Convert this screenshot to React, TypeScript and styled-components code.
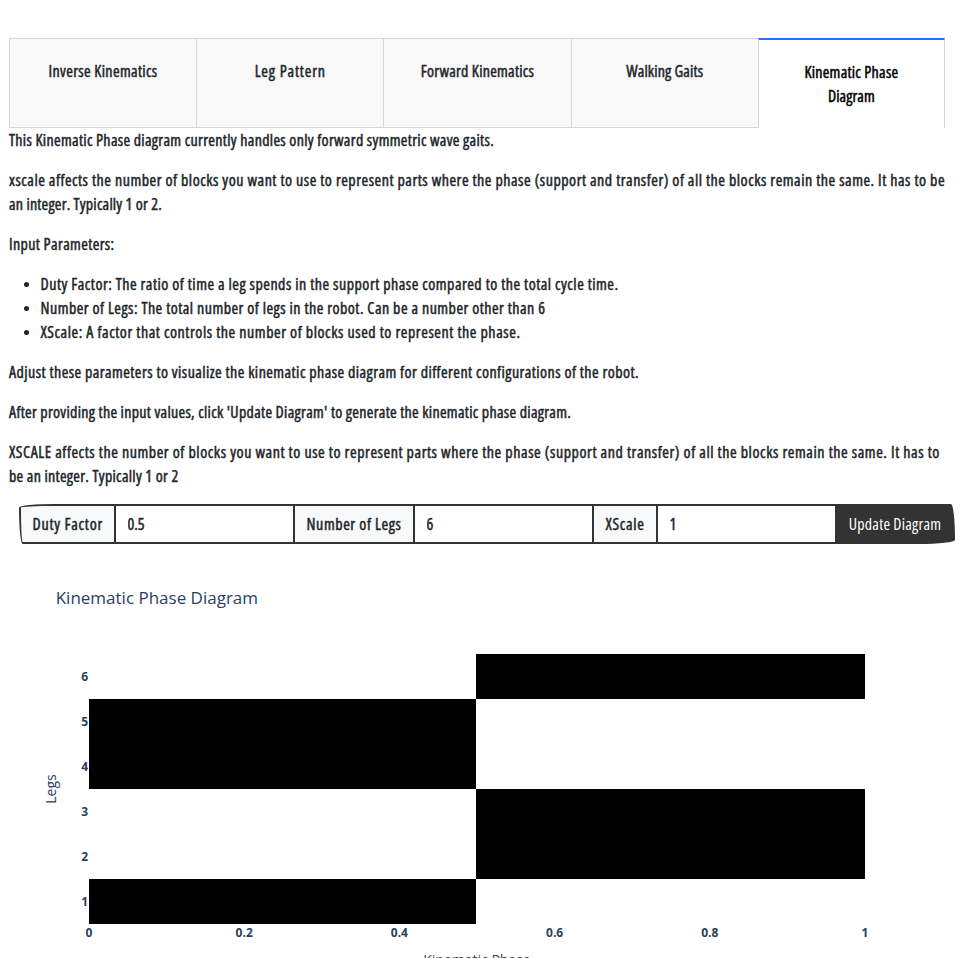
import React from "react";
import styled, { createGlobalStyle, css } from "styled-components";

const GlobalStyle = createGlobalStyle`
  *, *::before, *::after { box-sizing: border-box; }
  html, body { height: 100%; overflow: hidden; }
  body {
    margin: 0;
    background: #fff;
    color: #212529;
    font: 500 16px/24px "Open Sans", sans-serif;
    font-stretch: 75%;
  }
`;

const Page = styled.main`
  display: flex;
  flex-direction: column;
  height: 958px;
  overflow: hidden;
  padding: 38px 0 0 9px;
`;

const Phrase = styled.span<{ $spacing: number }>`
  letter-spacing: ${(p) => p.$spacing}px;
  white-space: nowrap;
  -webkit-text-stroke: 0.45px currentColor;
`;

const Tabs = styled.nav`
  display: grid;
  grid-template-columns: repeat(5, 1fr);
  width: 936px;
  height: 90px;
  flex: none;
`;

const Tab = styled.div<{ $selected?: boolean }>`
  display: flex;
  flex-direction: column;
  align-items: center;
  padding: 20px 25px;
  border: 1px solid #d6d6d6;
  border-right: 0;
  background: #f9f9f9;
  ${(p) =>
    p.$selected &&
    css`
      border-top: 2px solid #1975fa;
      border-right: 1px solid #d6d6d6;
      border-bottom: 0;
      background: #fff;
      color: #000;
    `}
`;

const Copy = styled.section`
  width: 945px;
  flex: none;
`;

const Paragraph = styled.p`
  display: flex;
  flex-direction: column;
  margin: 0 0 16px;
`;

const Bullets = styled.ul`
  margin: 0 0 16px;
  padding-left: 31.5px;
`;

const Bullet = styled.li`
  height: 24px;
  &::marker {
    font-size: 14px;
  }
`;

const InputGroup = styled.form`
  display: flex;
  flex: none;
  width: 936px;
  height: 40px;
  margin-left: 10px;
`;

const groupItem = css`
  height: 40px;
  border: 2px solid #333;
  padding: 6px 11.5px;
  white-space: nowrap;
`;

const GroupLabel = styled.label<{ $width: number; $first?: boolean }>`
  ${groupItem}
  width: ${(p) => p.$width}px;
  margin-left: ${(p) => (p.$first ? 0 : -2)}px;
  border-radius: ${(p) => (p.$first ? "255px 0 0 25px / 25px 0 0 255px" : "0")};
  background: #f8f9fa;
`;

const GroupInput = styled.input`
  ${groupItem}
  flex: 1 1 0;
  min-width: 0;
  margin-left: -2px;
  border-radius: 0;
  outline: 0;
  background: #fff;
  color: #212529;
  font: inherit;
  -webkit-text-stroke: 0.45px currentColor;
`;

const UpdateButton = styled.button`
  ${groupItem}
  width: 120px;
  margin-left: -2px;
  border-radius: 0 25px 225px 0 / 0 225px 25px 0;
  background: #333;
  color: #fff;
  font: inherit;
  letter-spacing: 0.2px;
`;

const Chart = styled.svg`
  display: block;
  flex: none;
  width: 930px;
  height: 450px;
  fill: #2a3f5f;
  font-family: "Open Sans", verdana, arial, sans-serif;
  font-stretch: 100%;
  font-weight: 400;
`;

const Title = styled.text`
  font-size: 17px;
`;

const AxisTitle = styled.text`
  font-size: 14px;
  text-anchor: middle;
`;

const Tick = styled.text<{ $anchor: "middle" | "end" }>`
  font-size: 12px;
  font-weight: 700;
  text-anchor: ${(p) => p.$anchor};
`;

type Line = [text: string, spacing: number];

const tabs: { lines: Line[]; selected?: boolean }[] = [
  { lines: [["Inverse Kinematics", 0.35]] },
  { lines: [["Leg Pattern", 0.85]] },
  { lines: [["Forward Kinematics", 0.26]] },
  { lines: [["Walking Gaits", 0.14]] },
  { lines: [["Kinematic Phase", 0.26], ["Diagram", 0.08]], selected: true },
];

const intro: Line[][] = [
  [["This Kinematic Phase diagram currently handles only forward symmetric wave gaits.", 0.32]],
  [
    ["xscale affects the number of blocks you want to use to represent parts where the phase (support and transfer) of all the blocks remain the same. It has to be", 0.519],
    ["an integer. Typically 1 or 2.", 0.211],
  ],
  [["Input Parameters:", 0.38]],
];

const parameters: Line[] = [
  ["Duty Factor: The ratio of time a leg spends in the support phase compared to the total cycle time.", 0.499],
  ["Number of Legs: The total number of legs in the robot. Can be a number other than 6", 0.48],
  ["XScale: A factor that controls the number of blocks used to represent the phase.", 0.558],
];

const outro: Line[][] = [
  [["Adjust these parameters to visualize the kinematic phase diagram for different configurations of the robot.", 0.449]],
  [["After providing the input values, click 'Update Diagram' to generate the kinematic phase diagram.", 0.3]],
  [
    ["XSCALE affects the number of blocks you want to use to represent parts where the phase (support and transfer) of all the blocks remain the same. It has to", 0.566],
    ["be an integer. Typically 1 or 2", 0.3],
  ],
];

const fields = [
  { label: "Duty Factor", value: "0.5", width: 97, spacing: 0.75 },
  { label: "Number of Legs", value: "6", width: 122, spacing: 0.59 },
  { label: "XScale", value: "1", width: 66, spacing: 0.7 },
];

// Support phase of each leg, bottom row first: true when it fills the first half.
const supportFirst = [true, false, false, true, true, false];
const xTicks = ["0", "0.2", "0.4", "0.6", "0.8", "1"];

const plot = { left: 80, top: 110, width: 776, split: 387, row: 45 };
const plotBottom = plot.top + plot.row * supportFirst.length;

const Paragraphs = ({ items }: { items: Line[][] }) => (
  <>
    {items.map((lines) => (
      <Paragraph key={lines[0][0]}>
        {lines.map(([text, spacing]) => (
          <Phrase key={text} $spacing={spacing}>{text}</Phrase>
        ))}
      </Paragraph>
    ))}
  </>
);

const PhaseChart = () => (
  <Chart viewBox="0 0 930 450">
    <Title x={46.7} y={60}>Kinematic Phase Diagram</Title>
    {supportFirst.map((first, i) => {
      const y = plotBottom - plot.row * (i + 1);
      return (
        <g key={i}>
          <rect
            x={first ? plot.left : plot.left + plot.split}
            y={y}
            width={first ? plot.split : plot.width - plot.split}
            height={plot.row}
            fill="#000"
            shapeRendering="crispEdges"
          />
          <Tick $anchor="end" x={79} y={y + 27}>{i + 1}</Tick>
        </g>
      );
    })}
    {xTicks.map((label, i) => (
      <Tick key={label} $anchor="middle" x={plot.left + (plot.width / 5) * i} y={393}>{label}</Tick>
    ))}
    <AxisTitle transform="translate(46.5 245) rotate(-90)">Legs</AxisTitle>
    <AxisTitle x={468} y={420.5}>Kinematic Phase</AxisTitle>
  </Chart>
);

export default function App() {
  return (
    <>
      <GlobalStyle />
      <Page>
        <Tabs>
          {tabs.map(({ lines, selected }) => (
            <Tab key={lines[0][0]} $selected={selected}>
              {lines.map(([text, spacing]) => (
                <Phrase key={text} $spacing={spacing}>{text}</Phrase>
              ))}
            </Tab>
          ))}
        </Tabs>
        <Copy>
          <Paragraphs items={intro} />
          <Bullets>
            {parameters.map(([text, spacing]) => (
              <Bullet key={text}><Phrase $spacing={spacing}>{text}</Phrase></Bullet>
            ))}
          </Bullets>
          <Paragraphs items={outro} />
        </Copy>
        <InputGroup onSubmit={(e) => e.preventDefault()}>
          {fields.map((f, i) => (
            <React.Fragment key={f.label}>
              <GroupLabel $width={f.width} $first={i === 0}>
                <Phrase $spacing={f.spacing}>{f.label}</Phrase>
              </GroupLabel>
              <GroupInput defaultValue={f.value} aria-label={f.label} />
            </React.Fragment>
          ))}
          <UpdateButton>Update Diagram</UpdateButton>
        </InputGroup>
        <PhaseChart />
      </Page>
    </>
  );
}
